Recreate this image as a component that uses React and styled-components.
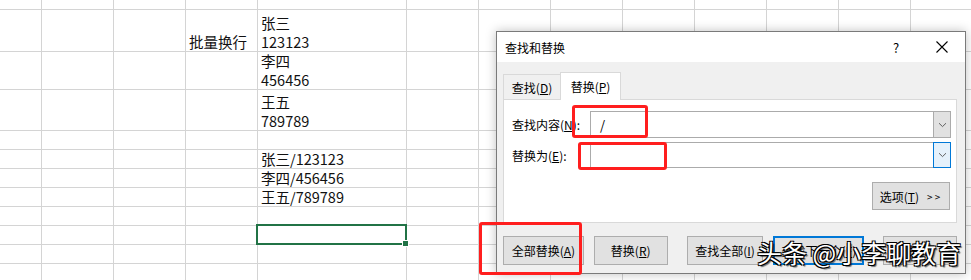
import React from "react";
import styled, { createGlobalStyle, css } from "styled-components";

const GlobalStyle = createGlobalStyle`
  html, body {
    margin: 0;
    padding: 0;
    background: #fff;
  }
  body {
    font-family: "Noto Sans CJK SC", "Noto Sans", sans-serif;
  }
`;

const colWidths = [42, 72, 72, 72, 149, 72, 72, 72, 72, 72, 72, 72, 72];
const rowHeights = [10, 42, 38, 41, 19, 19, 19, 19, 19, 19, 19, 19, 19];

const cellText = {
  "1-3": ["批量换行"],
  "1-4": ["张三", "123123"],
  "2-4": ["李四", "456456"],
  "3-4": ["王五", "789789"],
  "5-4": ["张三/123123"],
  "6-4": ["李四/456456"],
  "7-4": ["王五/789789"],
};
const selectedCell = "9-4";

const footerButtons = [
  { label: "全部替换", key: "A", width: 81, gap: 0 },
  { label: "替换", key: "R", width: 74, gap: 10 },
  { label: "查找全部", key: "I", width: 77, gap: 19 },
  { label: "查找下一个", key: "F", width: 91, gap: 10, primary: true },
  { label: "关闭", width: 74, gap: 19 },
];

const marks = [
  { left: 572, top: 105, width: 76, height: 33 },
  { left: 578, top: 142, width: 89, height: 28 },
  { left: 479, top: 222, width: 103, height: 53 },
];

const Screen = styled.div`
  position: relative;
  width: 971px;
  height: 280px;
  overflow: hidden;
  background: #fff;
`;

const Sheet = styled.div`
  display: grid;
  grid-template-columns: ${colWidths.map((w) => `${w}px`).join(" ")};
  grid-template-rows: ${rowHeights.map((h) => `${h}px`).join(" ")};
`;

const Cell = styled.div`
  position: relative;
  box-sizing: border-box;
  border-right: 1px solid #d4d4d4;
  border-bottom: 1px solid #d4d4d4;
  display: flex;
  flex-direction: column;
  justify-content: flex-end;
  padding: 0 0 0 3px;
  font-size: 14.5px;
  line-height: 19px;
  color: #111;
  white-space: nowrap;

  ${({ $selected }) =>
    $selected &&
    css`
      &::after {
        content: "";
        position: absolute;
        z-index: 2;
        left: -2px;
        top: -2px;
        right: -1px;
        bottom: -1px;
        border: 2px solid #217346;
      }
      &::before {
        content: "";
        position: absolute;
        z-index: 3;
        right: -3px;
        bottom: -3px;
        width: 5px;
        height: 5px;
        background: #217346;
        border: 1px solid #fff;
      }
    `}
`;

const Dialog = styled.div`
  position: absolute;
  left: 496px;
  top: 31px;
  width: 470px;
  height: 243px;
  box-sizing: border-box;
  border: 1px solid #7a7a7a;
  background: #f0f0f0;
  box-shadow: 0 0 10px rgba(0, 0, 0, 0.25);
  display: flex;
  flex-direction: column;
  font-size: 12px;
  color: #000;
`;

const TitleBar = styled.div`
  height: 30px;
  background: #fff;
  display: flex;
  align-items: center;
  padding-left: 8px;
`;

const Title = styled.span`
  flex: 1;
  font-size: 12px;
`;

const CaptionButton = styled.div`
  width: 46px;
  height: 30px;
  display: flex;
  align-items: center;
  justify-content: center;
  font-size: 13px;
`;

const Body = styled.div`
  flex: 1;
  display: flex;
  flex-direction: column;
  padding: 9px 8px 0 6px;
`;

const TabStrip = styled.div`
  display: flex;
  align-items: flex-end;
  height: 28px;
`;

const Tab = styled.div`
  box-sizing: border-box;
  display: flex;
  align-items: center;
  justify-content: center;
  border: 1px solid #d9d9d9;
  border-bottom: none;
  width: ${({ $active }) => ($active ? 61 : 58)}px;
  height: ${({ $active }) => ($active ? 28 : 25)}px;
  background: ${({ $active }) => ($active ? "#fff" : "#f0f0f0")};
  margin-bottom: ${({ $active }) => ($active ? -1 : 0)}px;
  margin-left: ${({ $active }) => ($active ? -1 : 0)}px;
  position: relative;
  z-index: ${({ $active }) => ($active ? 1 : 0)};
`;

const Panel = styled.div`
  box-sizing: border-box;
  height: 124px;
  background: #fff;
  border: 1px solid #d9d9d9;
  padding: 11px 5px 0 8px;
  display: flex;
  flex-direction: column;
`;

const FieldRow = styled.div`
  display: flex;
  align-items: center;
  margin-bottom: 4px;
`;

const Label = styled.span`
  width: 78px;
  flex: none;
`;

const Combo = styled.div`
  flex: 1;
  box-sizing: border-box;
  height: ${({ $h }) => $h}px;
  border: 1px solid #ababab;
  display: flex;
  background: #fff;
`;

const ComboValue = styled.div`
  flex: 1;
  display: flex;
  align-items: center;
  padding-left: 9px;
  font-size: 13px;
`;

const DropButton = styled.div`
  box-sizing: border-box;
  width: 18px;
  margin: -1px -1px -1px 0;
  display: flex;
  align-items: center;
  justify-content: center;
  border: 1px solid ${({ $focus }) => ($focus ? "#0078d7" : "#ababab")};
  background: ${({ $focus }) => ($focus ? "#e5f1fb" : "#e1e1e1")};
`;

const OptionsRow = styled.div`
  display: flex;
  justify-content: flex-end;
  margin-top: 10px;
  padding-right: 1px;
`;

const Button = styled.div`
  box-sizing: border-box;
  width: ${({ $w }) => $w}px;
  height: ${({ $h }) => $h || 29}px;
  margin-left: ${({ $gap }) => $gap || 0}px;
  display: flex;
  align-items: center;
  justify-content: center;
  background: #e1e1e1;
  border: ${({ $primary }) =>
    $primary ? "2px solid #0078d7" : "1px solid #adadad"};
  white-space: nowrap;
`;

const Arrows = styled.span`
  margin-left: 8px;
  font-size: 10px;
  letter-spacing: 2px;
`;

const Footer = styled.div`
  display: flex;
  padding-top: 13px;
`;

const Mark = styled.div`
  position: absolute;
  box-sizing: border-box;
  border: 3px solid #ff1e1e;
  border-radius: 3px;
  z-index: 5;
`;

const Watermark = styled.div`
  position: absolute;
  left: 757px;
  top: 240px;
  z-index: 6;
  font-size: 25px;
  line-height: 25px;
  color: #fff;
  white-space: nowrap;
  text-shadow:
    1px 1px 0 #000,
    -1px -1px 0 #000,
    1px -1px 0 #000,
    -1px 1px 0 #000,
    2px 2px 1px rgba(0, 0, 0, 0.55);
`;

const Chevron = () => (
  <svg width="9" height="6" viewBox="0 0 9 6">
    <path d="M1 1.2 L4.5 4.6 L8 1.2" fill="none" stroke="#606060" strokeWidth="1" />
  </svg>
);

const CloseIcon = () => (
  <svg width="12" height="12" viewBox="0 0 12 12">
    <path d="M0.5 0.5 L11.5 11.5 M11.5 0.5 L0.5 11.5" stroke="#000" strokeWidth="1.1" />
  </svg>
);

const Hot = ({ k }) => (
  <>
    (<u>{k}</u>)
  </>
);

const App = () => (
  <Screen>
    <GlobalStyle />
    <Sheet>
      {rowHeights.map((_, r) =>
        colWidths.map((_, c) => {
          const id = `${r}-${c}`;
          const lines = cellText[id] || [];
          return (
            <Cell key={id} $selected={id === selectedCell}>
              {lines.map((t) => (
                <span key={t}>{t}</span>
              ))}
            </Cell>
          );
        })
      )}
    </Sheet>

    <Dialog>
      <TitleBar>
        <Title>查找和替换</Title>
        <CaptionButton>?</CaptionButton>
        <CaptionButton>
          <CloseIcon />
        </CaptionButton>
      </TitleBar>
      <Body>
        <TabStrip>
          <Tab>
            查找<Hot k="D" />
          </Tab>
          <Tab $active>
            替换<Hot k="P" />
          </Tab>
        </TabStrip>
        <Panel>
          <FieldRow>
            <Label>
              查找内容<Hot k="N" />:
            </Label>
            <Combo $h={27}>
              <ComboValue>/</ComboValue>
              <DropButton>
                <Chevron />
              </DropButton>
            </Combo>
          </FieldRow>
          <FieldRow>
            <Label>
              替换为<Hot k="E" />:
            </Label>
            <Combo $h={26}>
              <ComboValue />
              <DropButton $focus>
                <Chevron />
              </DropButton>
            </Combo>
          </FieldRow>
          <OptionsRow>
            <Button $w={78} $h={28}>
              选项<Hot k="T" />
              <Arrows>&gt;&gt;</Arrows>
            </Button>
          </OptionsRow>
        </Panel>
        <Footer>
          {footerButtons.map((b) => (
            <Button key={b.label} $w={b.width} $gap={b.gap} $primary={b.primary}>
              {b.label}
              {b.key && <Hot k={b.key} />}
            </Button>
          ))}
        </Footer>
      </Body>
    </Dialog>

    {marks.map((m, i) => (
      <Mark
        key={i}
        style={{ left: m.left, top: m.top, width: m.width, height: m.height }}
      />
    ))}

    <Watermark>头条 @小李聊教育</Watermark>
  </Screen>
);

export default App;
